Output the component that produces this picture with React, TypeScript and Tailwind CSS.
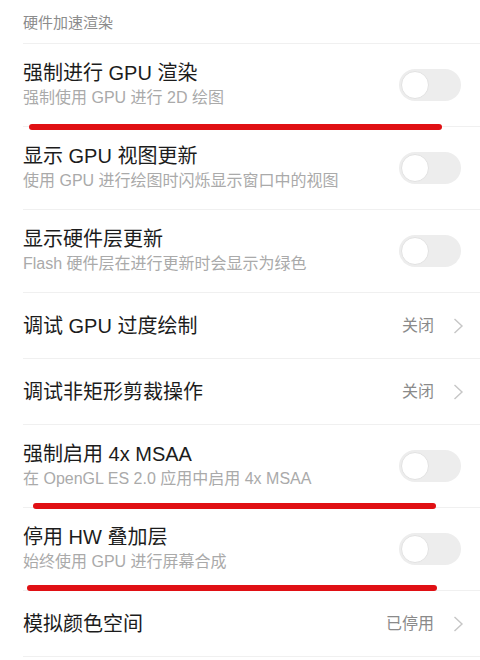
const font = { fontFamily: '"Liberation Sans", "Noto Sans CJK SC", sans-serif' }

type Row = {
  title: string
  sub?: string
  value?: string
  mark?: string
}

const rows: Row[] = [
  { title: '强制进行 GPU 渲染', sub: '强制使用 GPU 进行 2D 绘图', mark: 'top-[80px] left-[29px] w-[413px]' },
  { title: '显示 GPU 视图更新', sub: '使用 GPU 进行绘图时闪烁显示窗口中的视图' },
  { title: '显示硬件层更新', sub: 'Flash 硬件层在进行更新时会显示为绿色' },
  { title: '调试 GPU 过度绘制', value: '关闭' },
  { title: '调试非矩形剪裁操作', value: '关闭' },
  { title: '强制启用 4x MSAA', sub: '在 OpenGL ES 2.0 应用中启用 4x MSAA', mark: 'top-[78px] left-[33px] w-[403px]' },
  { title: '停用 HW 叠加层', sub: '始终使用 GPU 进行屏幕合成', mark: 'top-[77px] left-[27px] w-[410px]' },
  { title: '模拟颜色空间', value: '已停用' },
]

const Toggle = () => (
  <div className="flex items-center w-[62px] h-[32px] rounded-full bg-[#ededed] shrink-0">
    <div className="ml-[2px] w-[28px] h-[28px] rounded-full bg-white border border-[#e2e2e2]" />
  </div>
)

const Chevron = () => (
  <svg width="11" height="16" viewBox="0 0 11 16" fill="none">
    <polyline points="1.5,1 9,8 1.5,15" stroke="#c6c6c6" strokeWidth="1.4" />
  </svg>
)

export default function App() {
  return (
    <div className="w-[480px] h-[660px] bg-white overflow-hidden" style={font}>
      {/* section header */}
      <div className="ml-[23px] h-[44px] flex items-center pt-[4px] border-b border-[#f0f0f0]">
        <span className="text-[15px] text-[#8c8c8c]">硬件加速渲染</span>
      </div>

      {rows.map((r) => (
        <div key={r.title} className="relative">
          <div
            className={`ml-[23px] flex items-center justify-between border-b border-[#f0f0f0] ${
              r.sub ? 'h-[83px] pr-[19px]' : 'h-[66px] pr-[16px]'
            }`}
          >
            <div className="flex flex-col">
              <span className="text-[20px] leading-[26px] text-[#1c1c1c]">{r.title}</span>
              {r.sub && <span className="text-[16px] leading-[24px] text-[#aaaaaa]">{r.sub}</span>}
            </div>
            {r.value ? (
              <div className="flex items-center gap-[19px]">
                <span className="text-[16px] text-[#8a8a8a]">{r.value}</span>
                <Chevron />
              </div>
            ) : (
              <Toggle />
            )}
          </div>
          {r.mark && <div className={`absolute h-[6px] rounded-full bg-[#e01014] ${r.mark}`} />}
        </div>
      ))}
    </div>
  )
}
